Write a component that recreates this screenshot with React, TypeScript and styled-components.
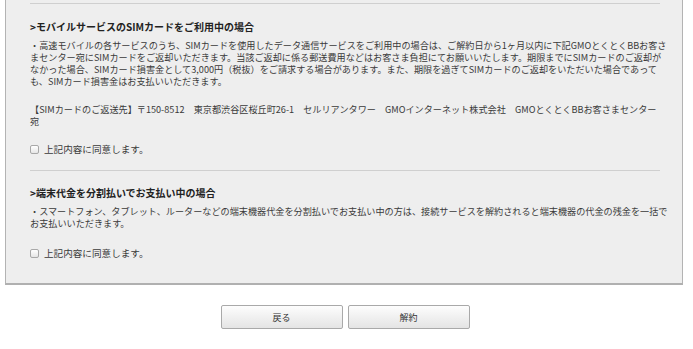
import React from "react"
import styled, { createGlobalStyle } from "styled-components"

const GlobalStyle = createGlobalStyle`
    html, body {
        margin: 0;
        padding: 0;
        background: #ffffff;
    }
    body {
        font-family: "Noto Sans CJK JP", "Noto Sans", sans-serif;
        color: #333333;
    }
`

const Page = styled.div`
    width: 693px;
    height: 349px;
    overflow: hidden;
`

const Panel = styled.div`
    margin: 0 10px 0 5px;
    background: #eeeeee;
    border: 1px solid #b3b3b3;
    border-top: none;
    border-bottom: 2px solid #b0b0b0;
    padding: 3px 22px 24px 24px;
`

const Divider = styled.hr`
    margin: 0;
    border: none;
    border-top: 1px solid #cfcfcf;
    height: 0;
`

const Section = styled.section<{ $top: number }>`
    padding-top: ${(p) => p.$top}px;
`

const Title = styled.h2`
    margin: 0 0 5px;
    font-size: 10px;
    line-height: 14px;
    font-weight: bold;
    color: #222222;
`

const Text = styled.p<{ $gap?: number }>`
    margin: 0 0 ${(p) => p.$gap ?? 0}px;
    font-size: 9.15px;
    line-height: 12px;
    white-space: nowrap;
    color: #3a3a3a;
`

const Agree = styled.label<{ $top: number; $bottom: number }>`
    display: flex;
    align-items: center;
    gap: 5px;
    height: 12px;
    margin: ${(p) => p.$top}px 0 ${(p) => p.$bottom}px;
    font-size: 9.6px;
    color: #3a3a3a;
`

const Box = styled.span`
    width: 7px;
    height: 7px;
    border: 1px solid #a8a8a8;
    border-radius: 2px;
    background: linear-gradient(#ffffff, #e6e6e6);
`

const Buttons = styled.div`
    display: flex;
    justify-content: center;
    gap: 5px;
    margin-top: 20px;
    padding-right: 3px;
`

const Button = styled.button`
    width: 122px;
    height: 24px;
    border: 1px solid #a9a9a9;
    border-radius: 2px;
    background: linear-gradient(#fdfdfd, #e4e4e4);
    font-family: "Noto Sans CJK JP", sans-serif;
    font-size: 9px;
    color: #333333;
    padding: 0;
`

export default function App() {
    return (
        <Page>
            <GlobalStyle />
            <Panel>
                <Divider />
                <Section $top={16}>
                    <Title>&gt;モバイルサービスのSIMカードをご利用中の場合</Title>
                    <Text $gap={16}>
                        ・高速モバイルの各サービスのうち、SIMカードを使用したデータ通信サービスをご利用中の場合は、ご解約日から1ヶ月以内に下記GMOとくとくBBお客さ
                        <br />
                        まセンター宛にSIMカードをご返却いただきます。当該ご返却に係る郵送費用などはお客さま負担にてお願いいたします。期限までにSIMカードのご返却が
                        <br />
                        なかった場合、SIMカード損害金として3,000円（税抜）をご請求する場合があります。また、期限を過ぎてSIMカードのご返却をいただいた場合であって
                        <br />
                        も、SIMカード損害金はお支払いいただきます。
                    </Text>
                    <Text>
                        【SIMカードのご返送先】〒150-8512　東京都渋谷区桜丘町26-1　セルリアンタワー　GMOインターネット株式会社　GMOとくとくBBお客さまセンター
                        <br />
                        宛
                    </Text>
                    <Agree $top={16} $bottom={15}>
                        <Box />
                        上記内容に同意します。
                    </Agree>
                </Section>
                <Divider />
                <Section $top={15}>
                    <Title>&gt;端末代金を分割払いでお支払い中の場合</Title>
                    <Text>
                        ・スマートフォン、タブレット、ルーターなどの端末機器代金を分割払いでお支払い中の方は、接続サービスを解約されると端末機器の代金の残金を一括で
                        <br />
                        お支払いいただきます。
                    </Text>
                    <Agree $top={18} $bottom={0}>
                        <Box />
                        上記内容に同意します。
                    </Agree>
                </Section>
            </Panel>
            <Buttons>
                <Button>戻る</Button>
                <Button>解約</Button>
            </Buttons>
        </Page>
    )
}
